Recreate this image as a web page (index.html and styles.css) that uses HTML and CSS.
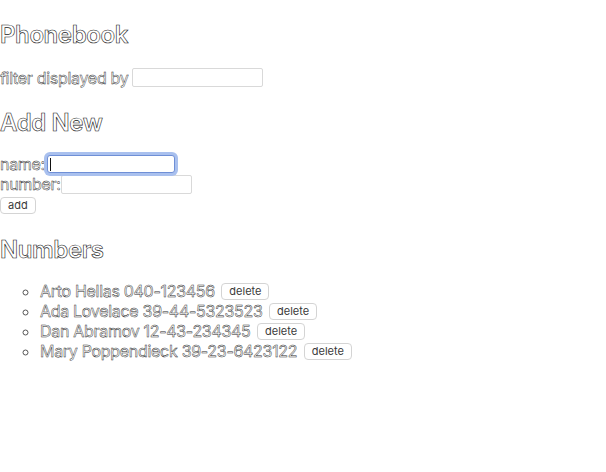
FILE: index.html
```html
<!DOCTYPE html>
<html>
<head>
<meta charset="utf-8">
<title>Phonebook</title>
<link rel="stylesheet" href="styles.css">
</head>
<body>
<div class="app">
  <h2 class="title">Phonebook</h2>
  <div class="filter">
    <span class="label">filter displayed by</span>
    <input class="field" type="text">
  </div>
  <h2 class="title">Add New</h2>
  <form class="form">
    <div class="row">
      <span class="label">name:</span><span class="caret-wrap"><input class="field focused" type="text"></span>
    </div>
    <div class="row">
      <span class="label">number:</span><input class="field" type="text">
    </div>
    <div class="row">
      <button class="btn" type="button">add</button>
    </div>
  </form>
  <h2 class="title title-list">Numbers</h2>
  <ul class="list">
    <li class="item"><span class="label">Arto Hellas 040-123456</span> <button class="btn del" type="button">delete</button></li>
    <li class="item"><span class="label">Ada Lovelace 39-44-5323523</span> <button class="btn del" type="button">delete</button></li>
    <li class="item"><span class="label">Dan Abramov 12-43-234345</span> <button class="btn del" type="button">delete</button></li>
    <li class="item"><span class="label">Mary Poppendieck 39-23-6423122</span> <button class="btn del" type="button">delete</button></li>
  </ul>
</div>
</body>
</html>
```

FILE: styles.css
```css
html, body {
  margin: 0;
  padding: 0;
  background: #fff;
}
body {
  font-family: Inter, "Liberation Sans", sans-serif;
  font-size: 16px;
  color: #222;
}
.title {
  font-size: 24px;
  font-weight: 600;
  margin: 20px 0;
  line-height: 29px;
  color: #fff;
  -webkit-text-stroke: 0.6px #222;
  letter-spacing: -0.4px;
}
.title-list {
  margin-bottom: 17px;
}
.label {
  color: #fff;
  -webkit-text-stroke: 0.45px #2a2a2a;
  letter-spacing: -0.3px;
}
.filter {
  display: flex;
  align-items: center;
  gap: 4px;
  height: 19px;
  margin-top: -1px;
  padding-bottom: 1px;
}
.field {
  box-sizing: border-box;
  width: 131px;
  height: 19px;
  border: 1px solid #d9d9d9;
  border-radius: 2px;
  padding: 0 3px;
  margin: 0;
  font-size: 13px;
  background: #fff;
  outline: none;
}
.form {
  margin: 0;
  padding-bottom: 1px;
}
.row {
  display: flex;
  align-items: center;
  height: 20px;
}
.row:first-child {
  margin-top: -3px;
}
.row:last-child {
  margin-top: 3px;
  height: 17px;
}
.caret-wrap {
  position: relative;
  display: inline-flex;
  margin-left: 2px;
}
.caret-wrap::after {
  content: "";
  position: absolute;
  left: 3px;
  top: 3px;
  width: 1px;
  height: 13px;
  background: #111;
}
.focused {
  border-color: #6f8fd6;
  box-shadow: 0 0 0 3px #a9c0ee;
  border-radius: 3px;
  width: 128px;
  height: 18px;
}
.btn {
  box-sizing: border-box;
  font-family: Inter, "Liberation Sans", sans-serif;
  font-size: 11px;
  color: #3a3a3a;
  background: #fff;
  border: 1px solid #d4d4d4;
  border-radius: 4px;
  height: 17px;
  padding: 0 7px;
  margin: 0;
  line-height: 15px;
}
.list {
  margin: 0;
  padding-left: 40px;
  list-style-type: circle;
}
.item {
  height: 20px;
  line-height: 20px;
  color: #555;
}
.del {
  vertical-align: middle;
  position: relative;
  top: -1px;
  margin-left: 2px;
}
```
